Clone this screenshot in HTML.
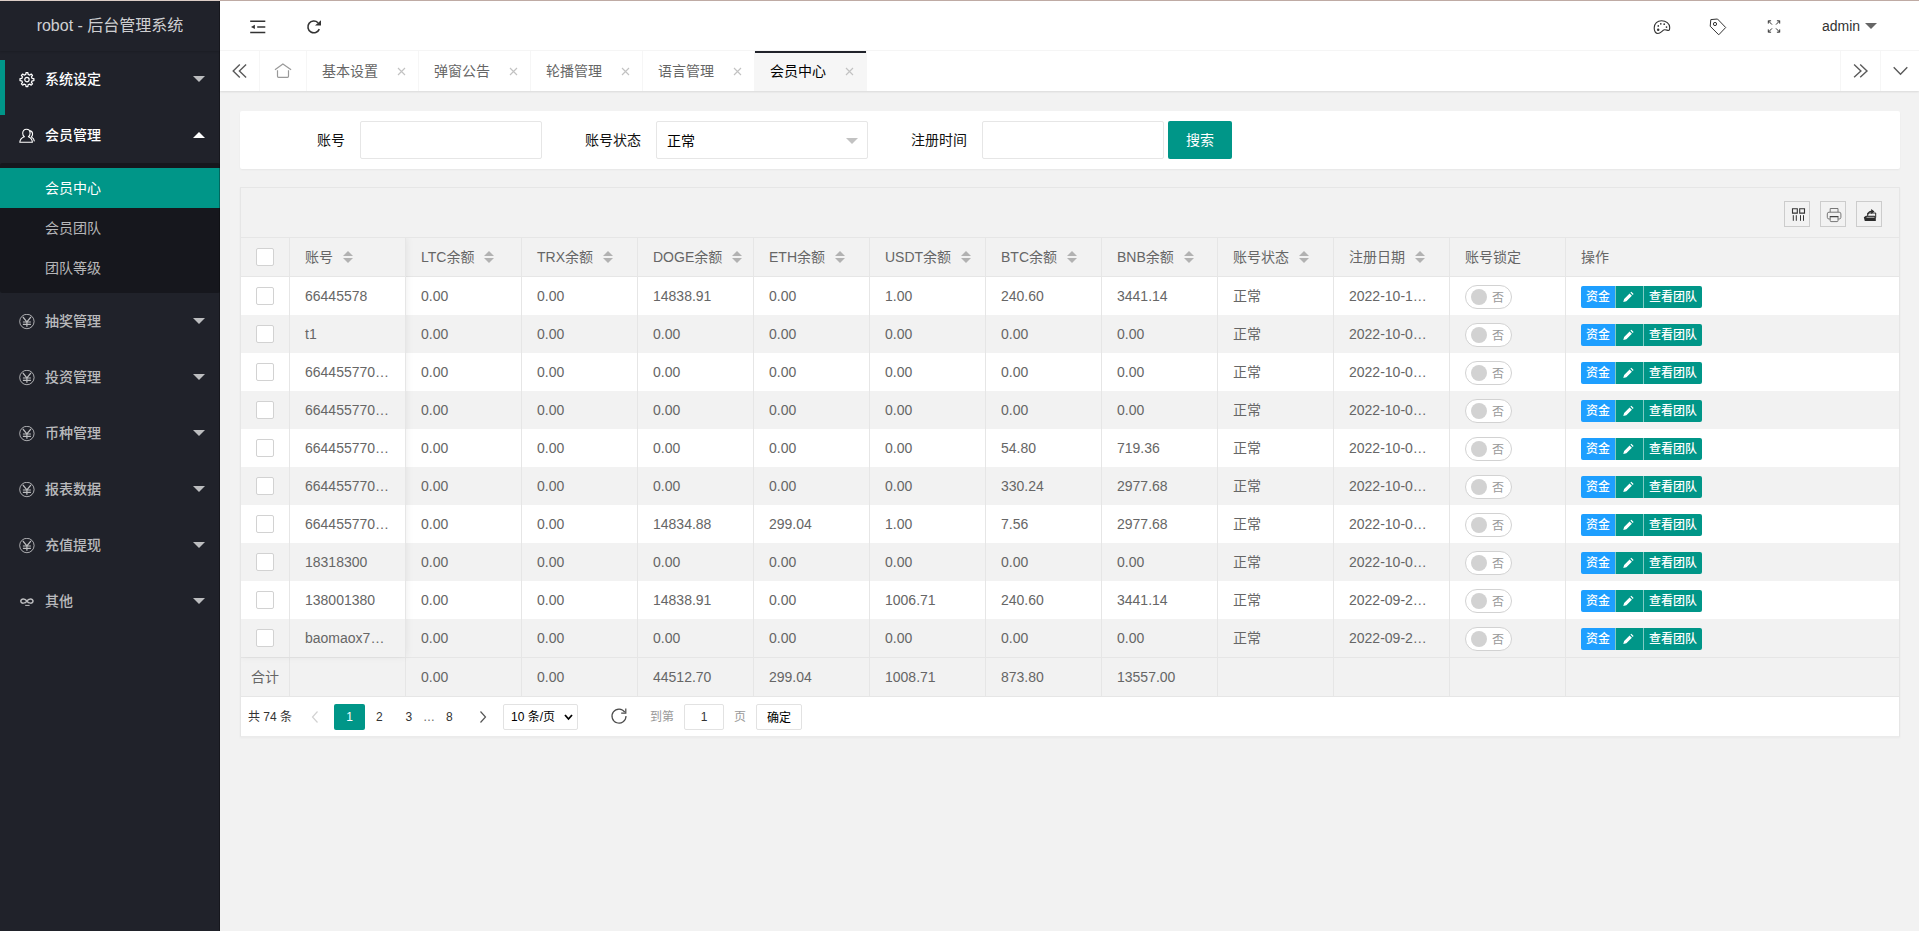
<!DOCTYPE html>
<html lang="zh-CN">
<head>
<meta charset="utf-8">
<title>robot - 后台管理系统</title>
<style>
*{box-sizing:border-box;margin:0;padding:0}
html,body{width:1919px;height:931px;overflow:hidden;background:#f2f2f2}
body{font-family:"Liberation Sans","Noto Sans CJK SC",sans-serif;font-size:14px;color:#333;line-height:24px;position:relative}
ul{list-style:none}
svg{display:block}
.abs{position:absolute}
/* side */
.side{position:absolute;left:0;top:0;width:220px;height:931px;background:#20222a;color:rgba(255,255,255,.8);overflow:hidden}
.logo{position:absolute;left:0;top:0;width:220px;height:50px;line-height:50px;text-align:center;font-size:16px;color:rgba(255,255,255,.8);box-shadow:0 1px 2px 0 rgba(0,0,0,.15)}
.nav{position:absolute;left:0;top:50px;width:220px}
.nav .item{position:relative;height:56px;line-height:56px;padding-left:45px;font-size:14px;font-weight:500;color:rgba(255,255,255,.7)}
.nav .item.on,.nav .item.hv{color:#fff}
.nav .item .ico{position:absolute;left:19px;top:21px;width:16px;height:16px}
.nav .more{position:absolute;right:15px;top:25px;width:0;height:0;border:6px solid transparent;border-top-color:rgba(255,255,255,.7)}
.nav .more.up{top:19px;border-top-color:transparent;border-bottom-color:#fff}
.nav .child{background:rgba(0,0,0,.3);padding:5px 0;border-radius:2px}
.nav .child div{height:40px;line-height:40px;padding-left:45px;font-weight:400;color:rgba(255,255,255,.7)}
.nav .child div.this{background:#009688;color:#fff}
.navbar{position:absolute;left:0;top:59px;width:5px;height:55px;background:#009688}
/* header */
.header{position:absolute;left:220px;top:0;width:1699px;height:50px;background:#fff;border-bottom:1px solid #f6f6f6}
.topline{position:absolute;left:0;top:0;width:1919px;height:1px;background:linear-gradient(90deg,#dccdc6 0,#dccdc6 220px,#bfaba4 220px);z-index:10}
.tabs{position:absolute;left:220px;top:50px;width:1699px;height:40px;background:#fff;box-shadow:0 1px 2px 0 rgba(0,0,0,.1);line-height:40px;color:#666}
.tabs .ctl{position:absolute;top:0;width:40px;height:40px;border-right:1px solid #f6f6f6}
.tabs .ctl.r{border-right:0;border-left:1px solid #f6f6f6}
.tabs ul{position:absolute;left:40px;top:0;height:40px;white-space:nowrap}
.tabs li{position:relative;float:left;box-sizing:content-box;height:40px;line-height:40px;padding:0 40px 0 15px;border-right:1px solid #f6f6f6;font-size:14px;color:#666}
.tabs li.home{padding:0 15px;width:16px}
.tabs li.this{background:#f6f6f6;color:#000}
.tabs li.this:after{content:"";position:absolute;left:0;top:0;width:100%;height:2px;background:#20222a}
.tabs li .x{position:absolute;right:12.200px;top:15.800px;width:9px;height:9px}
/* body */
.card{position:absolute;background:#fff;border-radius:2px;box-shadow:0 1px 2px 0 rgba(0,0,0,.05)}
.lbl{position:absolute;top:17px;height:24px;line-height:24px;font-size:14px;color:#111;text-align:right}
.inp{position:absolute;top:10px;height:38px;border:1px solid #e6e6e6;border-radius:2px;background:#fff}
.btn{position:absolute;left:928px;top:10px;width:64px;height:38px;line-height:38px;background:#009688;color:#fff;text-align:center;border-radius:2px;font-size:14px}
/* table */
.tv{position:absolute;left:240px;top:186px;width:1660px;height:550px;border:1px solid #e6e6e6;border-bottom-color:#ebebeb;background:#fff;box-shadow:0 1px 2px 0 rgba(0,0,0,.04)}
.tool{position:absolute;left:0;top:0;width:1658px;height:50px;background:#f2f2f2;border-bottom:1px solid #e6e6e6}
.tool .tb{position:absolute;top:13px;width:26px;height:26px;border:1px solid #ccc}
table{border-collapse:separate;border-spacing:0;table-layout:fixed;position:absolute;left:0;top:50px;width:1658px}
th,td{height:38px;padding:0 15px;font-size:14px;color:#666;text-align:left;font-weight:400;border-right:1px solid #e6e6e6;white-space:nowrap;overflow:hidden;text-overflow:ellipsis;line-height:28px}
th{background:#f2f2f2;border-bottom:1px solid #e6e6e6;height:39px}
tr.e td{background:#f2f2f2}
tr.sum td{background:#f2f2f2;border-top:1px solid #e6e6e6;border-bottom:1px solid #e6e6e6;height:40px}
th:last-child,td:last-child{border-right:0}
.cb{display:block;width:18px;height:18px;border:1px solid #d2d2d2;border-radius:2px;background:#fff;margin:0 auto}
td.c,th.c{padding:0}
.sort{display:inline-block;position:relative;width:10px;height:14px;margin-left:5px;vertical-align:-2px}
.sort:before,.sort:after{content:"";position:absolute;left:5px;border:5px solid transparent}
.sort:before{top:-4px;border-bottom-color:#b2b2b2}
.sort:after{top:8px;border-top-color:#b2b2b2}
.sw{display:inline-block;position:relative;width:47px;height:24px;border:1px solid #d2d2d2;border-radius:20px;background:#fff;vertical-align:middle}
.sw i{position:absolute;left:5px;top:3px;width:16px;height:16px;border-radius:50%;background:#d2d2d2}
.sw em{position:absolute;left:26px;top:0;line-height:24px;font-size:12px;color:#999;font-style:normal}
.bg{display:inline-block;font-size:0;vertical-align:middle;position:relative;top:3px}
.bg span{display:inline-block;height:22px;line-height:22px;padding:0 5px;font-size:12px;font-weight:500;color:#fff;background:#009688;vertical-align:top}
.bg span.b{background:#1e9fff;border-radius:2px 0 0 2px}
.bg span.m{border-left:1px solid rgba(255,255,255,.5)}
.bg span.l{border-left:1px solid rgba(255,255,255,.5);border-radius:0 2px 2px 0}
.page{position:absolute;left:0;top:509px;width:1658px;height:39px;background:#fff;font-size:12px;color:#333}
.page span,.page a{position:absolute;top:8px;height:24px;line-height:24px}
</style>
</head>
<body>
<div id="wrap" style="position:absolute;left:0;top:1px;width:1919px;height:930px">
<div class="side">
  <div class="logo">robot - 后台管理系统</div>
  <div class="nav"><div class="item hv"><svg class="ico" viewBox="0 0 16 16"><path d="M6.79 2.43L7.02 0.66L8.88 0.66L9.11 2.43L10.79 3.13L12.20 2.04L13.51 3.35L12.42 4.76L13.12 6.44L14.89 6.67L14.89 8.53L13.12 8.76L12.42 10.44L13.51 11.85L12.20 13.16L10.79 12.07L9.11 12.77L8.88 14.54L7.02 14.54L6.79 12.77L5.11 12.07L3.70 13.16L2.39 11.85L3.48 10.44L2.78 8.76L1.01 8.53L1.01 6.67L2.78 6.44L3.48 4.76L2.39 3.35L3.70 2.04L5.11 3.13Z" fill="none" stroke="currentColor" stroke-width="1.250" stroke-linejoin="round"/><circle cx="7.950" cy="7.600" r="2.200" fill="none" stroke="currentColor" stroke-width="1.200"/></svg>系统设定<i class="more"></i></div><div class="item on"><svg class="ico" viewBox="0 0 16 16"><g fill="none" stroke="currentColor" stroke-width="1.100" stroke-linejoin="round"><path d="M5.400 8.700C4.300 7.900 3.700 6.600 3.700 5.200C3.700 2.900 5.200 1.300 7.400 1.300C9.600 1.300 11.100 2.900 11.100 5.200C11.100 6.600 10.500 7.900 9.400 8.700C11.900 9.600 13.200 11.500 13.400 14.300H.8C1 11.500 2.600 9.600 5.400 8.700Z"/><path d="M10.600 2.600C12.400 2.900 13.600 4.300 13.600 6.100C13.600 7.300 13.100 8.300 12.400 9C14.200 9.800 15.200 11.300 15.400 13.400"/></g></svg>会员管理<i class="more up"></i></div><div class="child"><div class="this">会员中心</div><div>会员团队</div><div>团队等级</div></div><div class="item"><svg class="ico" viewBox="0 0 16 16"><circle cx="7.900" cy="7.500" r="7.200" fill="none" stroke="currentColor" stroke-width=".9"/><path d="M3.900 3l4 4.800L11.900 3M3.900 8h8M3.900 10.300h8M7.900 7.800v4.900" fill="none" stroke="currentColor" stroke-width="1.200"/></svg>抽奖管理<i class="more"></i></div><div class="item"><svg class="ico" viewBox="0 0 16 16"><circle cx="7.900" cy="7.500" r="7.200" fill="none" stroke="currentColor" stroke-width=".9"/><path d="M3.900 3l4 4.800L11.900 3M3.900 8h8M3.900 10.300h8M7.900 7.800v4.900" fill="none" stroke="currentColor" stroke-width="1.200"/></svg>投资管理<i class="more"></i></div><div class="item"><svg class="ico" viewBox="0 0 16 16"><circle cx="7.900" cy="7.500" r="7.200" fill="none" stroke="currentColor" stroke-width=".9"/><path d="M3.900 3l4 4.800L11.900 3M3.900 8h8M3.900 10.300h8M7.900 7.800v4.900" fill="none" stroke="currentColor" stroke-width="1.200"/></svg>币种管理<i class="more"></i></div><div class="item"><svg class="ico" viewBox="0 0 16 16"><circle cx="7.900" cy="7.500" r="7.200" fill="none" stroke="currentColor" stroke-width=".9"/><path d="M3.900 3l4 4.800L11.900 3M3.900 8h8M3.900 10.300h8M7.900 7.800v4.900" fill="none" stroke="currentColor" stroke-width="1.200"/></svg>报表数据<i class="more"></i></div><div class="item"><svg class="ico" viewBox="0 0 16 16"><circle cx="7.900" cy="7.500" r="7.200" fill="none" stroke="currentColor" stroke-width=".9"/><path d="M3.900 3l4 4.800L11.900 3M3.900 8h8M3.900 10.300h8M7.900 7.800v4.900" fill="none" stroke="currentColor" stroke-width="1.200"/></svg>充值提现<i class="more"></i></div><div class="item"><svg class="ico" viewBox="0 0 16 16"><path d="M7.900 7.100C6.400 4.600 1.800 4.200 1.800 7.100C1.800 10 6.400 9.600 7.900 7.100C9.400 4.600 14 4.200 14 7.100C14 10 9.400 9.600 7.900 7.100Z" fill="none" stroke="currentColor" stroke-width="1.500"/><path d="M6.200 11.400h4.400" stroke="currentColor" stroke-width="1" fill="none"/></svg>其他<i class="more"></i></div></div>
  <div class="navbar"></div>
  <div class="abs" style="right:0;top:0;width:1px;height:931px;background:rgba(0,0,0,.3)"></div>
</div>
<div class="header">
<svg class="abs" style="left:0;top:0" width="1699" height="50" viewBox="0 0 1699 50">
<g stroke="#333" stroke-width="1.500" fill="none"><path d="M30.200 20.200h15.100M37.200 25.900h8.100M30.200 31.500h15.100"/></g>
<path d="M31 25.900l3.900-2.200v4.400z" fill="#333"/>
<path d="M98 21.700A5.900 5.900 0 1 0 99.300 28.100" stroke="#333" stroke-width="1.600" fill="none"/>
<path d="M101 19.200v5.400h-6z" fill="#333"/>
<g transform="translate(1420,9)">
<path d="M17.900 23.500C15.500 23.500 14.200 21 14.200 18C14.200 13.500 17.500 10.800 21.500 10.800C26 10.800 29.700 13.500 29.700 17.500C29.700 19.500 29.300 20.500 28.500 20.500C27 20.300 26 19.600 24.500 19.800C22 20.200 21 23.500 17.900 23.500Z" fill="none" stroke="#333" stroke-width="1.100"/>
<circle cx="18.300" cy="15.900" r=".85" fill="#333"/><circle cx="20.800" cy="13.800" r=".85" fill="#333"/><circle cx="24.200" cy="14.200" r=".85" fill="#333"/><circle cx="26.500" cy="17.100" r=".85" fill="#333"/><circle cx="18.200" cy="19.800" r="1.250" fill="#333"/>
<path d="M70.800 9.600L77.500 9L85.700 17.500L78.750 24.800L70.200 16.250Z" fill="none" stroke="#333" stroke-width="1" stroke-linejoin="round"/>
<circle cx="75" cy="14" r="1.600" fill="none" stroke="#333" stroke-width="1"/>
<g fill="none" stroke="#333" stroke-width="1"><path d="M132 14.600l-3.600-3.700M128.300 13.600v-2.800h2.800M136 14.600l3.600-3.700M139.700 13.600v-2.800h-2.800M132 18.400l-3.600 3.700M128.300 19.400v2.800h2.800M136 18.400l3.600 3.700M139.700 19.400v2.800h-2.800"/></g>
</g>
</svg>
<div class="abs" style="left:1602px;top:13px;height:24px;line-height:24px;font-size:14px;color:#333">admin</div>
<i class="abs" style="left:1645px;top:22px;width:0;height:0;border:6px solid transparent;border-top-color:#666"></i>
</div>
<div class="tabs">
<div class="ctl" style="left:0"></div>
<ul><li class="home"></li><li class="">基本设置<svg class="x" viewBox="0 0 9 9"><path d="M1 1l7 7M8 1L1 8" stroke="#c2c2c2" stroke-width="1.150" fill="none"/></svg></li><li class="">弹窗公告<svg class="x" viewBox="0 0 9 9"><path d="M1 1l7 7M8 1L1 8" stroke="#c2c2c2" stroke-width="1.150" fill="none"/></svg></li><li class="">轮播管理<svg class="x" viewBox="0 0 9 9"><path d="M1 1l7 7M8 1L1 8" stroke="#c2c2c2" stroke-width="1.150" fill="none"/></svg></li><li class="">语言管理<svg class="x" viewBox="0 0 9 9"><path d="M1 1l7 7M8 1L1 8" stroke="#c2c2c2" stroke-width="1.150" fill="none"/></svg></li><li class="this">会员中心<svg class="x" viewBox="0 0 9 9"><path d="M1 1l7 7M8 1L1 8" stroke="#c2c2c2" stroke-width="1.150" fill="none"/></svg></li></ul>
<div class="ctl r" style="left:1620px"></div>
<div class="ctl r" style="left:1660px"></div>
<svg class="abs" style="left:0;top:0" width="1699" height="40" viewBox="0 0 1699 40">
<g fill="none" stroke="#5a5a5a" stroke-width="1.400"><path d="M19.800 13.400L13.200 19.950L19.800 26.500M26.100 13.400L19.400 19.950L26.100 26.500"/>
<path d="M1634.100 13.600L1640.900 19.950L1634.100 26.300M1640.200 13.600L1647 19.950L1640.200 26.300"/>
<path d="M1673.700 16.300L1680.500 23.200L1687.300 16.300"/></g>
<g fill="none" stroke="#999" stroke-width="1.200"><path d="M54.950 18.800L62.900 13.100L71.100 18.800"/><path d="M57.500 19.200V25.300a1 1 0 0 0 1 1H67.500a1 1 0 0 0 1 -1V19.200"/></g>
</svg>
</div>
<div class="card" style="left:240px;top:110px;width:1660px;height:58px">
<div class="lbl" style="left:0;width:105px">账号</div><div class="inp" style="left:120px;width:182px"></div>
<div class="lbl" style="left:300px;width:101px">账号状态</div><div class="inp" style="left:416px;width:212px"><span class="abs" style="left:10px;top:7px;color:#000">正常</span><i class="abs" style="right:9px;top:15.500px;width:0;height:0;border:6px solid transparent;border-top-color:#c2c2c2"></i></div>
<div class="lbl" style="left:630px;width:97px">注册时间</div><div class="inp" style="left:742px;width:182px"></div>
<div class="btn">搜索</div>
</div>
<div class="tv"><div class="tool">
<div class="tb" style="left:1543px"><svg class="abs" style="left:0;top:0" width="24" height="24" viewBox="0 0 24 24"><path d="M7.500 6.700h4.800v4.400h-4.800zM14.700 6.700h4.800v4.400h-4.800z" fill="none" stroke="#333" stroke-width="1.100"/><path d="M8.300 13.200v5.600M11.300 13.200v5.600M15.500 13.200v5.600M18.500 13.200v5.600" stroke="#333" stroke-width="1"/></svg></div>
<div class="tb" style="left:1579px"><svg class="abs" style="left:0;top:0" width="24" height="24" viewBox="0 0 24 24"><g fill="none" stroke="#777" stroke-width="1"><path d="M9.200 10.200V6.500h7.800v3.700"/><path d="M9.200 17H8a1.700 1.700 0 0 1-1.700-1.700v-3.400A1.700 1.700 0 0 1 8 10.200h10.200a1.700 1.700 0 0 1 1.700 1.700v3.400a1.700 1.700 0 0 1-1.700 1.700H17"/><path d="M9.200 14.600h7.800v4.200a.8.800 0 0 1-.8.800H10a.8.800 0 0 1-.8-.8z"/></g><path d="M8.800 14.600h8.600" stroke="#444" stroke-width="1.200"/></svg></div>
<div class="tb" style="left:1615px"><svg class="abs" style="left:0;top:0" width="24" height="24" viewBox="0 0 24 24"><path d="M6.800 15.200l2.200-1.500h8.600l1.200 1.500v3.800H7.800z" fill="#2b2b2b"/><path d="M10.700 14v-3h8v4.500" fill="none" stroke="#2b2b2b" stroke-width="1"/><path d="M10.600 12.400c.2-2.300 1.500-3.500 3.600-3.700V6.900l3.300 2.600-3.300 2.600v-1.800c-1.500.1-2.400.7-2.700 2.100z" fill="#2b2b2b"/><path d="M9.500 15.300h8" stroke="#f2f2f2" stroke-width=".7"/></svg></div>
</div><table><colgroup><col style="width:49px"><col style="width:116px"><col style="width:116px"><col style="width:116px"><col style="width:116px"><col style="width:116px"><col style="width:116px"><col style="width:116px"><col style="width:116px"><col style="width:116px"><col style="width:116px"><col style="width:116px"><col style="width:333px"></colgroup><tr><th class="c"><span class="cb"></span></th><th>账号<i class="sort"></i></th><th>LTC余额<i class="sort"></i></th><th>TRX余额<i class="sort"></i></th><th>DOGE余额<i class="sort"></i></th><th>ETH余额<i class="sort"></i></th><th>USDT余额<i class="sort"></i></th><th>BTC余额<i class="sort"></i></th><th>BNB余额<i class="sort"></i></th><th>账号状态<i class="sort"></i></th><th>注册日期<i class="sort"></i></th><th>账号锁定</th><th>操作</th></tr><tr class="o"><td class="c"><span class="cb"></span></td><td>66445578</td><td>0.00</td><td>0.00</td><td>14838.91</td><td>0.00</td><td>1.00</td><td>240.60</td><td>3441.14</td><td>正常</td><td>2022-10-12 10:20:11</td><td><span class="sw"><i></i><em>否</em></span></td><td><span class="bg"><span class="b">资金</span><span class="m"><svg style="display:inline-block;vertical-align:top;margin:5px 4.300px 0 .7px" width="12" height="12" viewBox="0 0 12 12"><path d="M1.300 11l.8-3.100L7.600 2.400l2.300 2.300-5.500 5.500zM8.400 1.600l.9-.9 2.300 2.300-.9.900z" fill="#fff"/></svg></span><span class="l">查看团队</span></span></td></tr><tr class="e"><td class="c"><span class="cb"></span></td><td>t1</td><td>0.00</td><td>0.00</td><td>0.00</td><td>0.00</td><td>0.00</td><td>0.00</td><td>0.00</td><td>正常</td><td>2022-10-08 16:41:02</td><td><span class="sw"><i></i><em>否</em></span></td><td><span class="bg"><span class="b">资金</span><span class="m"><svg style="display:inline-block;vertical-align:top;margin:5px 4.300px 0 .7px" width="12" height="12" viewBox="0 0 12 12"><path d="M1.300 11l.8-3.100L7.600 2.400l2.300 2.300-5.500 5.500zM8.400 1.600l.9-.9 2.300 2.300-.9.900z" fill="#fff"/></svg></span><span class="l">查看团队</span></span></td></tr><tr class="o"><td class="c"><span class="cb"></span></td><td>664455770123</td><td>0.00</td><td>0.00</td><td>0.00</td><td>0.00</td><td>0.00</td><td>0.00</td><td>0.00</td><td>正常</td><td>2022-10-08 16:41:02</td><td><span class="sw"><i></i><em>否</em></span></td><td><span class="bg"><span class="b">资金</span><span class="m"><svg style="display:inline-block;vertical-align:top;margin:5px 4.300px 0 .7px" width="12" height="12" viewBox="0 0 12 12"><path d="M1.300 11l.8-3.100L7.600 2.400l2.300 2.300-5.500 5.500zM8.400 1.600l.9-.9 2.300 2.300-.9.900z" fill="#fff"/></svg></span><span class="l">查看团队</span></span></td></tr><tr class="e"><td class="c"><span class="cb"></span></td><td>664455770123</td><td>0.00</td><td>0.00</td><td>0.00</td><td>0.00</td><td>0.00</td><td>0.00</td><td>0.00</td><td>正常</td><td>2022-10-08 16:41:02</td><td><span class="sw"><i></i><em>否</em></span></td><td><span class="bg"><span class="b">资金</span><span class="m"><svg style="display:inline-block;vertical-align:top;margin:5px 4.300px 0 .7px" width="12" height="12" viewBox="0 0 12 12"><path d="M1.300 11l.8-3.100L7.600 2.400l2.300 2.300-5.500 5.500zM8.400 1.600l.9-.9 2.300 2.300-.9.900z" fill="#fff"/></svg></span><span class="l">查看团队</span></span></td></tr><tr class="o"><td class="c"><span class="cb"></span></td><td>664455770123</td><td>0.00</td><td>0.00</td><td>0.00</td><td>0.00</td><td>0.00</td><td>54.80</td><td>719.36</td><td>正常</td><td>2022-10-08 16:41:02</td><td><span class="sw"><i></i><em>否</em></span></td><td><span class="bg"><span class="b">资金</span><span class="m"><svg style="display:inline-block;vertical-align:top;margin:5px 4.300px 0 .7px" width="12" height="12" viewBox="0 0 12 12"><path d="M1.300 11l.8-3.100L7.600 2.400l2.300 2.300-5.500 5.500zM8.400 1.600l.9-.9 2.300 2.300-.9.900z" fill="#fff"/></svg></span><span class="l">查看团队</span></span></td></tr><tr class="e"><td class="c"><span class="cb"></span></td><td>664455770123</td><td>0.00</td><td>0.00</td><td>0.00</td><td>0.00</td><td>0.00</td><td>330.24</td><td>2977.68</td><td>正常</td><td>2022-10-08 16:41:02</td><td><span class="sw"><i></i><em>否</em></span></td><td><span class="bg"><span class="b">资金</span><span class="m"><svg style="display:inline-block;vertical-align:top;margin:5px 4.300px 0 .7px" width="12" height="12" viewBox="0 0 12 12"><path d="M1.300 11l.8-3.100L7.600 2.400l2.300 2.300-5.500 5.500zM8.400 1.600l.9-.9 2.300 2.300-.9.900z" fill="#fff"/></svg></span><span class="l">查看团队</span></span></td></tr><tr class="o"><td class="c"><span class="cb"></span></td><td>664455770123</td><td>0.00</td><td>0.00</td><td>14834.88</td><td>299.04</td><td>1.00</td><td>7.56</td><td>2977.68</td><td>正常</td><td>2022-10-08 16:41:02</td><td><span class="sw"><i></i><em>否</em></span></td><td><span class="bg"><span class="b">资金</span><span class="m"><svg style="display:inline-block;vertical-align:top;margin:5px 4.300px 0 .7px" width="12" height="12" viewBox="0 0 12 12"><path d="M1.300 11l.8-3.100L7.600 2.400l2.300 2.300-5.500 5.500zM8.400 1.600l.9-.9 2.300 2.300-.9.900z" fill="#fff"/></svg></span><span class="l">查看团队</span></span></td></tr><tr class="e"><td class="c"><span class="cb"></span></td><td>18318300</td><td>0.00</td><td>0.00</td><td>0.00</td><td>0.00</td><td>0.00</td><td>0.00</td><td>0.00</td><td>正常</td><td>2022-10-08 16:41:02</td><td><span class="sw"><i></i><em>否</em></span></td><td><span class="bg"><span class="b">资金</span><span class="m"><svg style="display:inline-block;vertical-align:top;margin:5px 4.300px 0 .7px" width="12" height="12" viewBox="0 0 12 12"><path d="M1.300 11l.8-3.100L7.600 2.400l2.300 2.300-5.500 5.500zM8.400 1.600l.9-.9 2.300 2.300-.9.900z" fill="#fff"/></svg></span><span class="l">查看团队</span></span></td></tr><tr class="o"><td class="c"><span class="cb"></span></td><td>138001380</td><td>0.00</td><td>0.00</td><td>14838.91</td><td>0.00</td><td>1006.71</td><td>240.60</td><td>3441.14</td><td>正常</td><td>2022-09-28 09:13:45</td><td><span class="sw"><i></i><em>否</em></span></td><td><span class="bg"><span class="b">资金</span><span class="m"><svg style="display:inline-block;vertical-align:top;margin:5px 4.300px 0 .7px" width="12" height="12" viewBox="0 0 12 12"><path d="M1.300 11l.8-3.100L7.600 2.400l2.300 2.300-5.500 5.500zM8.400 1.600l.9-.9 2.300 2.300-.9.900z" fill="#fff"/></svg></span><span class="l">查看团队</span></span></td></tr><tr class="e"><td class="c"><span class="cb"></span></td><td>baomaox78901</td><td>0.00</td><td>0.00</td><td>0.00</td><td>0.00</td><td>0.00</td><td>0.00</td><td>0.00</td><td>正常</td><td>2022-09-28 09:13:45</td><td><span class="sw"><i></i><em>否</em></span></td><td><span class="bg"><span class="b">资金</span><span class="m"><svg style="display:inline-block;vertical-align:top;margin:5px 4.300px 0 .7px" width="12" height="12" viewBox="0 0 12 12"><path d="M1.300 11l.8-3.100L7.600 2.400l2.300 2.300-5.500 5.500zM8.400 1.600l.9-.9 2.300 2.300-.9.900z" fill="#fff"/></svg></span><span class="l">查看团队</span></span></td></tr><tr class="sum"><td class="c" style="padding-left:10px">合计</td><td></td><td>0.00</td><td>0.00</td><td>44512.70</td><td>299.04</td><td>1008.71</td><td>873.80</td><td>13557.00</td><td></td><td></td><td></td><td></td></tr></table><div class="abs" style="left:0;top:50px;width:1658px;height:458px;overflow:hidden;pointer-events:none"><div class="abs" style="left:0;top:0;width:165px;height:419px;box-shadow:0 -1px 8px rgba(0,0,0,.08)"></div></div><div class="page">
<span style="left:7px">共 74 条</span>
<svg class="abs" style="left:70px;top:13px" width="8" height="14" viewBox="0 0 8 14"><path d="M6.500 1.500l-5 5.500 5 5.500" stroke="#d2d2d2" stroke-width="1.200" fill="none"/></svg>
<span style="left:93px;top:7px;width:31px;height:26px;line-height:26px;background:#009688;color:#fff;text-align:center;border-radius:2px;font-weight:500">1</span>
<span style="left:135px">2</span><span style="left:164.500px">3</span><span style="left:182px;color:#666">…</span><span style="left:205px">8</span>
<svg class="abs" style="left:238px;top:13px" width="8" height="14" viewBox="0 0 8 14"><path d="M1.500 1.500l5 5.500-5 5.500" stroke="#555" stroke-width="1.200" fill="none"/></svg>
<span style="left:262px;top:7px;width:75px;height:26px;line-height:24px;border:1px solid #e2e2e2;border-radius:2px;padding-left:7px;color:#000">10 条/页<svg class="abs" style="left:59.500px;top:9px" width="9" height="7" viewBox="0 0 9 7"><path d="M1 1l3.500 4L8 1" stroke="#000" stroke-width="1.800" fill="none"/></svg></span>
<svg class="abs" style="left:369px;top:10px" width="18" height="18" viewBox="0 0 18 18"><path d="M14.800 5.200A7 7 0 1 0 16 9" stroke="#4a4a4a" stroke-width="1.200" fill="none"/><path d="M15.800 1.500v4.600h-4.600" stroke="#4a4a4a" stroke-width="1.200" fill="none"/></svg>
<span style="left:409px;color:#999">到第</span>
<span style="left:443px;top:7px;width:40px;height:26px;line-height:24px;border:1px solid #e2e2e2;border-radius:2px;text-align:center;color:#333">1</span>
<span style="left:493px;color:#999">页</span>
<span style="left:515px;top:7px;width:46px;height:26px;line-height:26px;border:1px solid #e2e2e2;border-radius:2px;text-align:center;color:#000">确定</span>
</div></div>
</div>
<div class="topline"></div>
</body>
</html>
